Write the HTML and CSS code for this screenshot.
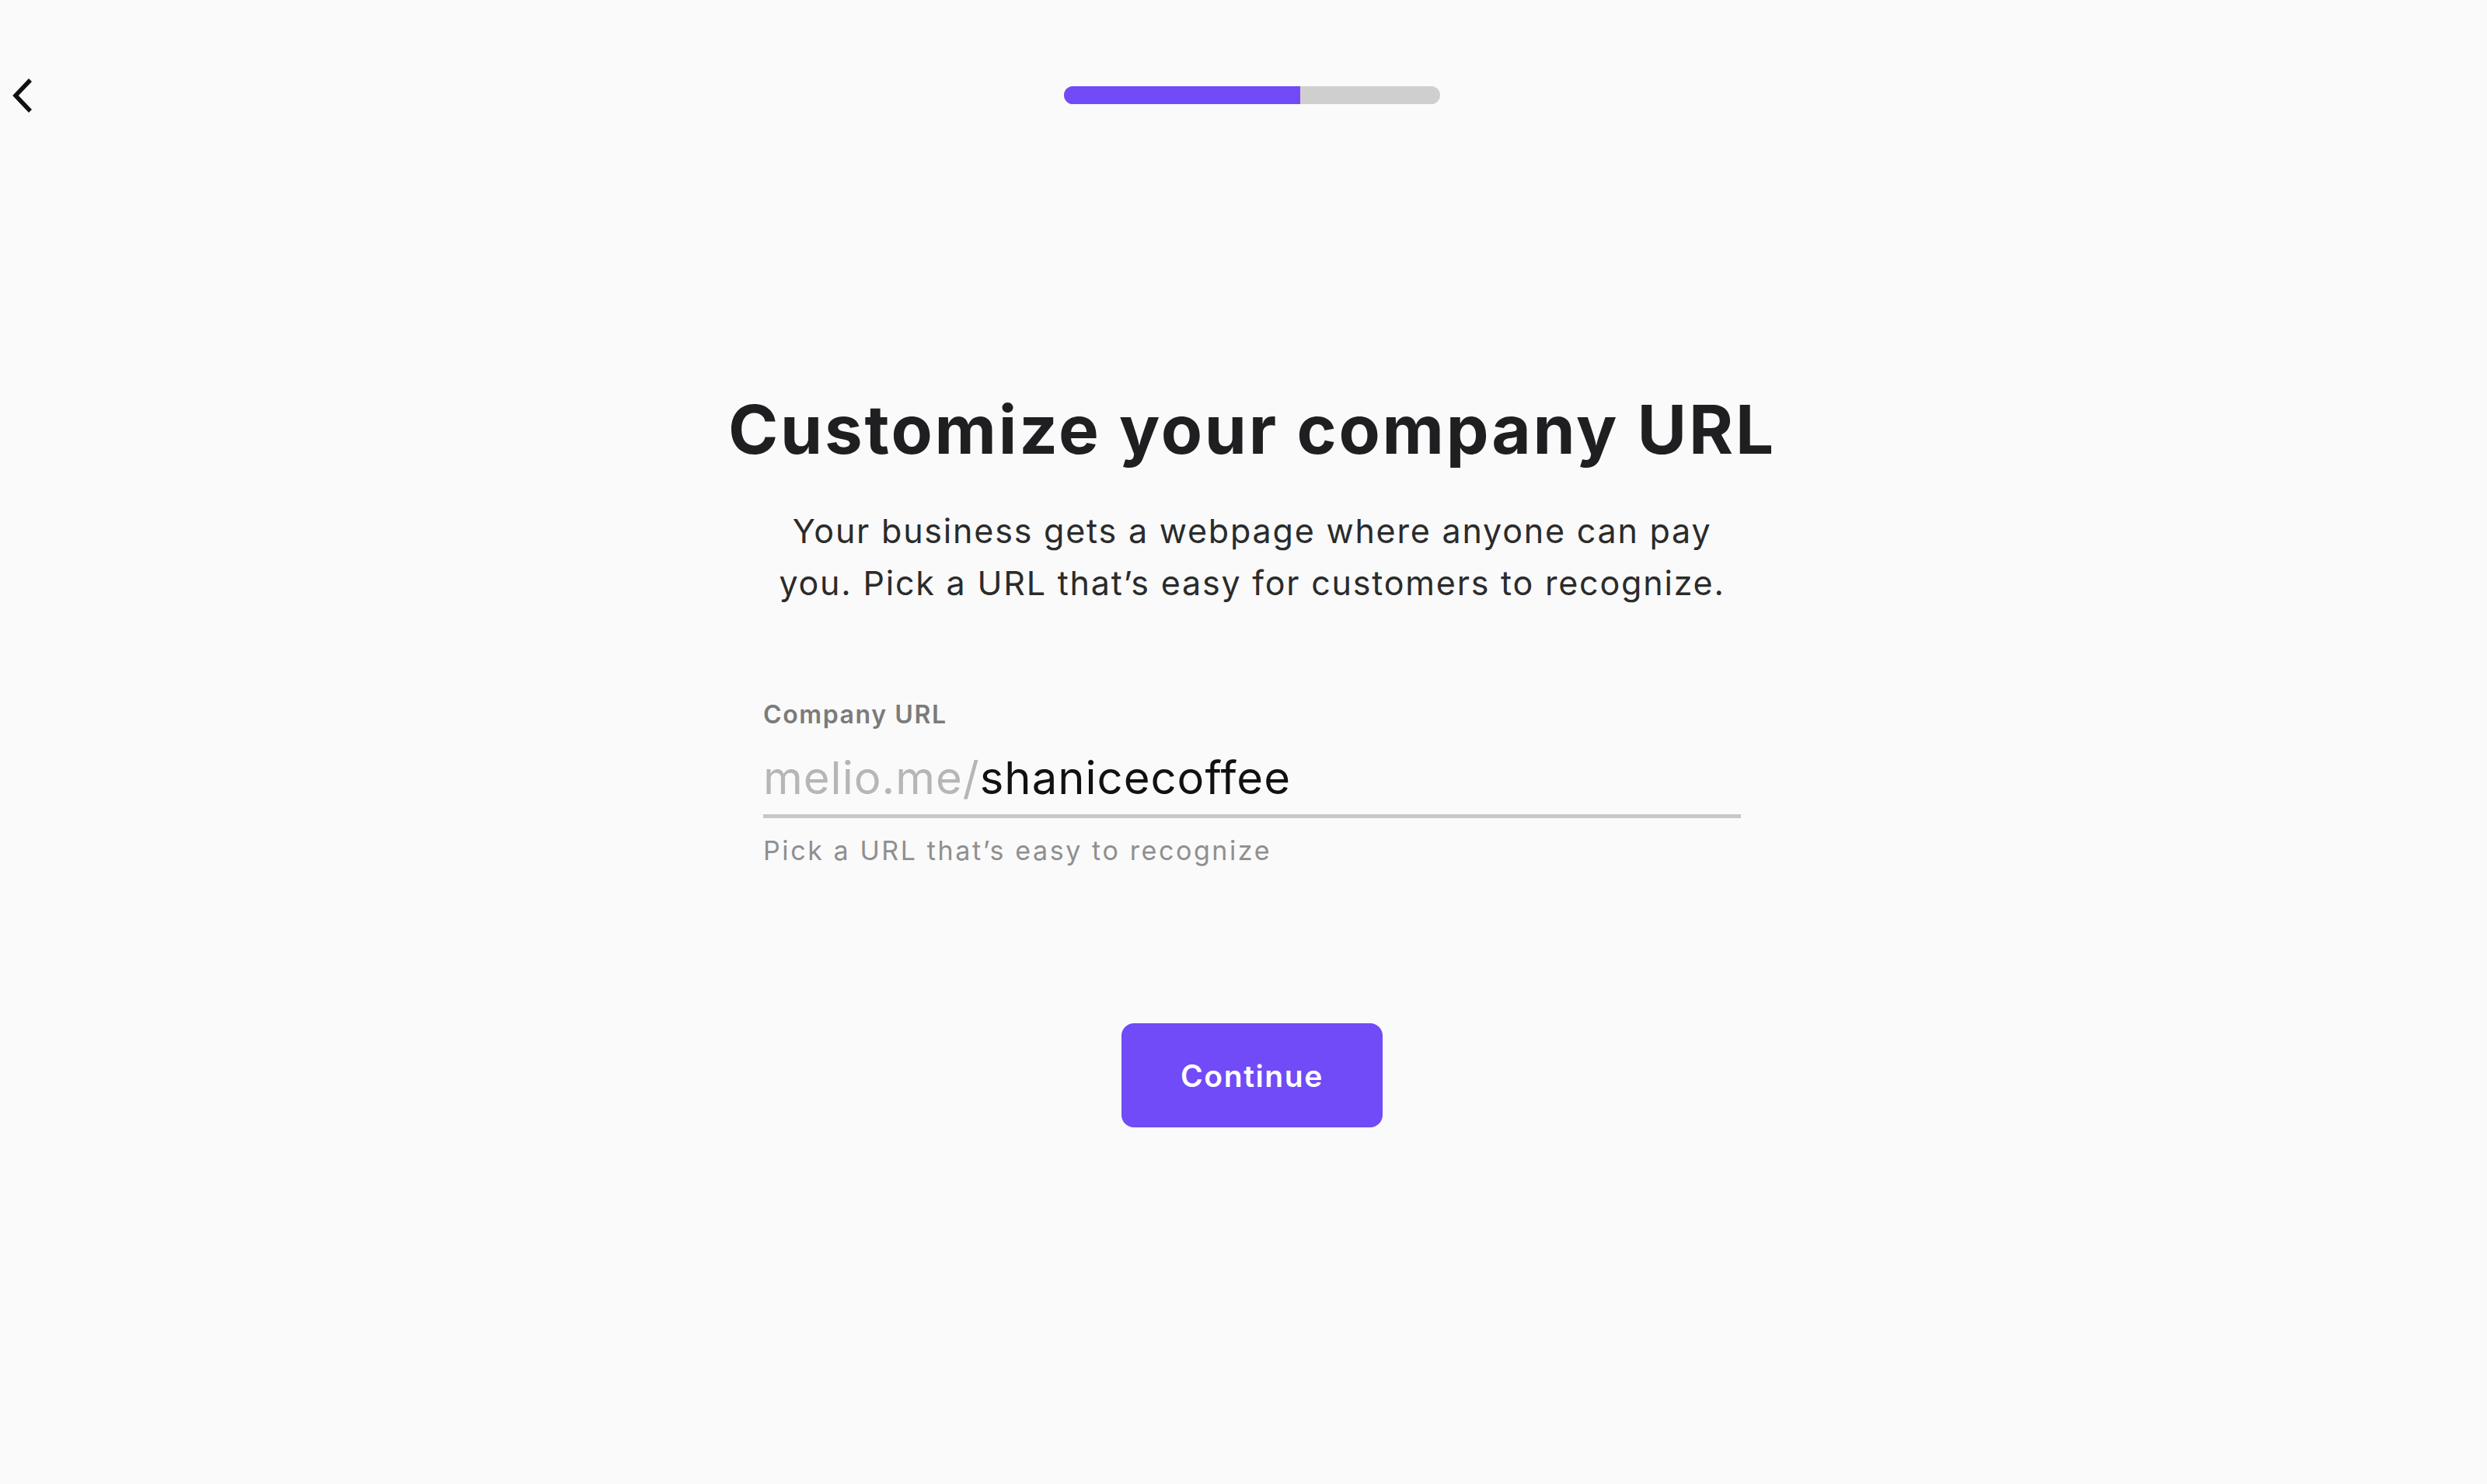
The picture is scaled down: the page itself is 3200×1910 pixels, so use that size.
FILE: index.html
```html
<!DOCTYPE html>
<html lang="en">
<head>
<meta charset="utf-8">
<title>Customize your company URL</title>
<link rel="stylesheet" href="styles.css">
</head>
<body>
<div class="page">
  <header class="topbar">
    <button class="back" type="button" aria-label="Back">
      <svg class="back-icon" width="32" height="50" viewBox="0 0 32 50"><path d="M25 5 L6 25 L25 45" fill="none" stroke="#111" stroke-width="5.5" stroke-linejoin="miter"/></svg>
    </button>
    <div class="progress"><div class="progress-fill" style="width:62.8%"></div></div>
    <div></div>
  </header>
  <main class="content">
    <h1 class="title">Customize your company URL</h1>
    <p class="subtitle">Your business gets a webpage where anyone can pay<br>you. Pick a URL that’s easy for customers to recognize.</p>
    <div class="field">
      <label class="field-label">Company URL</label>
      <div class="field-input"><span class="prefix">melio.me/</span><span class="value">shanicecoffee</span></div>
      <div class="field-hint">Pick a URL that’s easy to recognize</div>
    </div>
    <button class="continue" type="button">Continue</button>
  </main>
</div>
</body>
</html>
```
FILE: styles.css
```css
html, body {
  margin: 0;
  padding: 0;
  background: #fafafa;
}
body {
  font-family: "Inter", "Liberation Sans", sans-serif;
  color: #1f1f21;
}
.page {
  width: 3200px;
  height: 1910px;
  box-sizing: border-box;
  padding-left: 22px;
}
.topbar {
  height: 245px;
  display: grid;
  grid-template-columns: 1fr 484px 1fr;
  align-items: center;
}
.back {
  justify-self: start;
  margin-left: -8px;
  padding: 0;
  border: 0;
  background: none;
  display: flex;
}
.progress {
  height: 23px;
  border-radius: 12px;
  background: #cfcfcf;
  overflow: hidden;
  display: flex;
}
.progress-fill {
  height: 100%;
  background: #714bf7;
}
.content {
  display: flex;
  flex-direction: column;
  align-items: center;
  padding-top: 258px;
}
.title {
  margin: 0;
  font-size: 87px;
  line-height: 100px;
  font-weight: 700;
  letter-spacing: 2.8px;
  color: #1f1f21;
}
.subtitle {
  margin: 47px 0 0;
  font-size: 43px;
  line-height: 67px;
  font-weight: 400;
  letter-spacing: 1.8px;
  color: #2b2b2b;
  text-align: center;
}
.field {
  width: 1258px;
  margin-top: 116px;
  display: flex;
  flex-direction: column;
}
.field-label {
  font-size: 32px;
  line-height: 40px;
  font-weight: 600;
  letter-spacing: 1.6px;
  color: #7b7b7b;
}
.field-input {
  margin-top: 26px;
  font-size: 58px;
  line-height: 70px;
  letter-spacing: 1px;
  padding-bottom: 12px;
  border-bottom: 5px solid #c8c8c8;
}
.prefix {
  color: #b6b6b6;
}
.value {
  color: #111;
}
.field-hint {
  margin-top: 22px;
  font-size: 34px;
  line-height: 40px;
  letter-spacing: 2.6px;
  color: #8f8f8f;
}
.continue {
  margin-top: 202px;
  width: 336px;
  height: 134px;
  border: 0;
  border-radius: 16px;
  background: #714bf7;
  color: #fff;
  font-family: "Inter", "Liberation Sans", sans-serif;
  font-size: 39px;
  font-weight: 600;
  letter-spacing: 1.6px;
}
```
